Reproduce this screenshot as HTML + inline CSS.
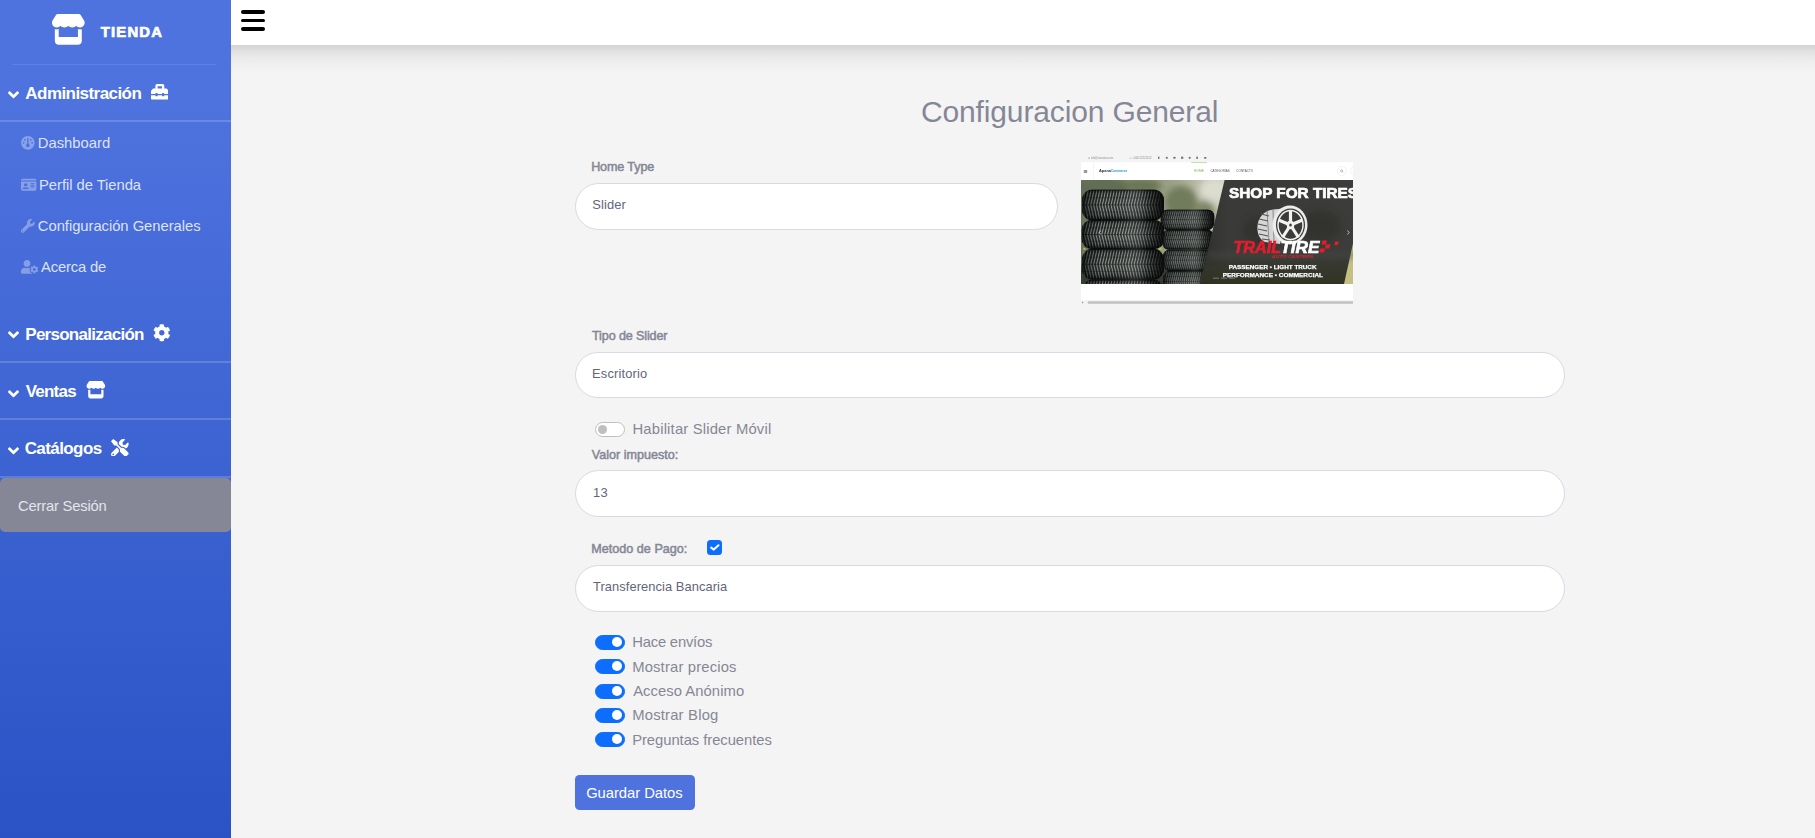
<!DOCTYPE html>
<html lang="es"><head><meta charset="utf-8"><title>Tienda - Configuracion General</title>
<style>
html,body{margin:0;padding:0}
html{overflow:hidden}
body{width:1815px;height:838px;overflow:hidden;background:#f4f4f4;font-family:"Liberation Sans",sans-serif;position:relative}
.t{position:absolute;white-space:nowrap;display:block}
.ic{position:absolute;display:block}
#sidebar{position:absolute;left:0;top:0;width:231px;height:838px;overflow:hidden;background:linear-gradient(180deg,#4e73df 10%,#224abe 100%) 0 0/100% 1040px no-repeat}
.hr{position:absolute;left:0;width:231px;height:2px;background:rgba(255,255,255,.17)}
#brandhr{position:absolute;left:12px;width:204px;top:63.5px;height:1px;background:rgba(255,255,255,.1)}
#logout{position:absolute;left:0;top:477.5px;width:231px;height:54.500px;background:#858796;border-radius:5px}
#topbar{position:absolute;left:231px;top:0;width:1584px;height:45px;background:#fff}
#tshadow{position:absolute;left:231px;top:45px;width:1584px;height:29px;background:linear-gradient(180deg,#d4d4d4 0%,#dadada 12%,#e2e2e2 23%,#ebebeb 48%,#f1f1f1 74%,#f4f4f4 100%)}
.bar{position:absolute;left:240.700px;width:24.500px;height:3.600px;border-radius:2px;background:#000}
.ctl{position:absolute;box-sizing:border-box;left:575px;height:47px;border:1px solid #d5dae6;border-radius:24px;background:#fff}
.sw{position:absolute;box-sizing:border-box;left:595px;width:30px;height:15px;border-radius:8px}
.sw.on{background:#0d6efd;border:1px solid #0d6efd}
.sw.on i{position:absolute;left:16.300px;top:1.400px;width:10px;height:10px;border-radius:50%;background:#fff}
.sw.off{background:#fff;border:1px solid #bfbfbf}
.sw.off i{position:absolute;left:1.700px;top:1.600px;width:9.600px;height:9.600px;border-radius:50%;background:#bfbfbf}
#chk{position:absolute;left:707px;top:540px;width:15px;height:15px;border-radius:3.500px;background:#0d6efd}
#btn{position:absolute;left:575px;top:775px;width:120px;height:35px;border-radius:4.500px;background:#4e73df}
#shot{position:absolute;left:1081px;top:152px}
</style></head><body>
<div id="sidebar">
<div id="brandhr"></div>
<div class="hr" style="top:120.2px"></div>
<div class="hr" style="top:360.7px"></div>
<div class="hr" style="top:418.1px"></div>
<div class="hr" style="top:475.8px"></div>
<div id="logout"></div>
</div>
<div id="topbar"></div><div id="tshadow"></div>
<div class="bar" style="top:10px"></div><div class="bar" style="top:18.900px;height:3.100px"></div><div class="bar" style="top:27.200px;height:3.700px"></div>
<div class="ctl" style="top:183px;width:483px"></div>
<div class="ctl" style="top:352px;width:990px;height:46px"></div>
<div class="ctl" style="top:470px;width:990px"></div>
<div class="ctl" style="top:565px;width:990px"></div>
<div class="sw off" style="top:422px"><i></i></div>
<div class="sw on" style="top:635.0px"><i></i></div><div class="sw on" style="top:659.0px"><i></i></div><div class="sw on" style="top:684.0px"><i></i></div><div class="sw on" style="top:708.0px"><i></i></div><div class="sw on" style="top:732.0px"><i></i></div>
<div id="chk"><svg width="15" height="15" viewBox="0 0 15 15" style="display:block"><path d="M4.200 7.600 L6.800 9.600 L11.500 5.300" fill="none" stroke="#fff" stroke-width="2" stroke-linecap="round" stroke-linejoin="round"/></svg></div>
<div id="btn"></div>
<svg id="shot" width="272" height="152" viewBox="0 0 272 152">
<defs>
<linearGradient id="bgG" x1="0" y1="0" x2="1" y2="0"><stop offset="0" stop-color="#69735a"/><stop offset=".3" stop-color="#808a6c"/><stop offset=".62" stop-color="#9da389"/><stop offset=".85" stop-color="#c3c5b0"/><stop offset="1" stop-color="#d2d2c2"/></linearGradient>
<radialGradient id="glow" cx=".5" cy=".5" r=".5"><stop offset="0" stop-color="#d9dacb" stop-opacity=".95"/><stop offset="1" stop-color="#d9dacb" stop-opacity="0"/></radialGradient>
<radialGradient id="dk" cx=".5" cy=".5" r=".5"><stop offset="0" stop-color="#4f5a42" stop-opacity=".9"/><stop offset="1" stop-color="#4f5a42" stop-opacity="0"/></radialGradient>
<linearGradient id="cyl" x1="0" y1="0" x2="1" y2="0"><stop offset="0" stop-color="#000" stop-opacity=".8"/><stop offset=".08" stop-color="#000" stop-opacity=".35"/><stop offset=".25" stop-color="#000" stop-opacity=".0"/><stop offset=".55" stop-color="#fff" stop-opacity=".06"/><stop offset=".8" stop-color="#000" stop-opacity=".3"/><stop offset="1" stop-color="#000" stop-opacity=".9"/></linearGradient>
<linearGradient id="cylV" x1="0" y1="0" x2="0" y2="1"><stop offset="0" stop-color="#000" stop-opacity=".6"/><stop offset=".14" stop-color="#000" stop-opacity=".05"/><stop offset=".5" stop-color="#fff" stop-opacity=".05"/><stop offset=".84" stop-color="#000" stop-opacity=".15"/><stop offset="1" stop-color="#000" stop-opacity=".8"/></linearGradient>
<linearGradient id="grs" x1="0" y1="0" x2="0" y2="1"><stop offset="0" stop-color="#34362a" stop-opacity="0"/><stop offset=".5" stop-color="#34362a" stop-opacity=".75"/><stop offset="1" stop-color="#30321f" stop-opacity=".9"/></linearGradient><clipPath id="panC"><polygon points="143.600,28 272,28 272,132 118.800,132"/></clipPath>
<linearGradient id="pan" x1="0" y1="0" x2="1" y2="0"><stop offset="0" stop-color="#2d2e2b"/><stop offset=".18" stop-color="#3a3a38"/><stop offset="1" stop-color="#3c3c3a"/></linearGradient>
<clipPath id="picC"><rect x="0" y="28" width="272" height="104"/></clipPath>
<filter id="soft" x="-5%" y="-5%" width="110%" height="110%"><feGaussianBlur stdDeviation=".4"/></filter>
<filter id="soft2"><feGaussianBlur stdDeviation=".25"/></filter>
<filter id="blur3" x="-20%" y="-20%" width="140%" height="140%"><feGaussianBlur stdDeviation="3"/></filter>
</defs>
<!-- top info row -->
<g fill="#8a8a8a" font-family="Liberation Sans, sans-serif" font-size="3.200" filter="url(#soft2)">
<text x="7" y="6.800" textLength="25" lengthAdjust="spacingAndGlyphs">✉ info@anovatus.com</text><text x="47.500" y="6.800" textLength="23" lengthAdjust="spacingAndGlyphs">☏ +506 22221122</text>
<g fill="#777"><rect x="77" y="4.600" width="1.400" height="2.400"/><circle cx="85.800" cy="5.800" r="1.100"/><rect x="92.400" y="4.700" width="2.100" height="2.100" rx=".6"/><rect x="100" y="4.700" width="2.300" height="2.100"/><circle cx="108.700" cy="5.800" r="1.100"/><rect x="115.300" y="4.600" width="1.600" height="2.400"/><rect x="123" y="4.900" width="2.500" height="1.800" rx=".6"/></g>
</g>
<rect x="0" y="10.200" width="272" height="138" fill="#fff"/>
<!-- nav -->
<g filter="url(#soft2)" font-family="Liberation Sans, sans-serif">
<rect x="110.300" y="10" width="15.700" height=".6" fill="#7cb342" opacity=".7"/>
<rect x="12.600" y="10.200" width=".4" height="17.800" fill="#e6e6e6"/>
<path d="M2.800 18.500h3.400M2.800 19.500h3.400M2.800 20.500h3.400" stroke="#444" stroke-width=".55"/>
<text x="18" y="20" font-size="3.900" font-weight="bold" fill="#2b2b3a" textLength="12" lengthAdjust="spacingAndGlyphs">Apana</text>
<text x="30" y="20" font-size="3.900" font-weight="bold" fill="#2a8fd6" textLength="16.200" lengthAdjust="spacingAndGlyphs">Commerce</text>
<text x="113.100" y="20.300" font-size="2.900" fill="#7cb342" textLength="9.800" lengthAdjust="spacingAndGlyphs">HOME</text>
<text x="129.400" y="20.300" font-size="2.900" fill="#555" textLength="19.400" lengthAdjust="spacingAndGlyphs">CATEGORÍAS</text>
<text x="155.300" y="20.300" font-size="2.900" fill="#555" textLength="16.900" lengthAdjust="spacingAndGlyphs">CONTACTO</text>
<circle cx="260.800" cy="19" r="4.500" fill="#fff" stroke="#e4e4e4" stroke-width=".5"/><circle cx="260.600" cy="18.800" r="1.100" fill="none" stroke="#666" stroke-width=".4"/><path d="M261.400 19.600l.9.900" stroke="#666" stroke-width=".4"/>
<circle cx="274" cy="19" r="4.500" fill="#fff" stroke="#e4e4e4" stroke-width=".5"/>
</g>
<!-- picture -->
<g clip-path="url(#picC)">
<rect x="0" y="28" width="150" height="104" fill="url(#bgG)"/>
<g filter="url(#blur3)">
<ellipse cx="22" cy="36" rx="26" ry="12" fill="#626d54"/>
<ellipse cx="62" cy="34" rx="18" ry="7" fill="#6a7556"/>
<ellipse cx="100" cy="50" rx="16" ry="16" fill="#717c5b"/>
<ellipse cx="124" cy="62" rx="10" ry="14" fill="#7d8666"/>
<ellipse cx="133" cy="38" rx="14" ry="12" fill="#dcdccf"/>
<rect x="-4" y="112" width="150" height="26" fill="#353a2e"/>
</g>
<g filter="url(#soft)">
<clipPath id="tcs0"><rect x="79.5" y="57.4" width="54" height="20.6" rx="7.4"/></clipPath><g clip-path="url(#tcs0)"><rect x="79.5" y="57.4" width="54" height="20.6" fill="#222624"/><path d="M79.6 58.6Q78.6 63.2 77.4 67.7Q78.6 72.2 79.6 76.8M81.7 58.6Q80.7 63.2 79.5 67.7Q80.7 72.2 81.7 76.8M83.8 58.6Q82.8 63.2 81.6 67.7Q82.8 72.2 83.8 76.8M85.9 58.6Q84.9 63.2 83.7 67.7Q84.9 72.2 85.9 76.8M88.0 58.6Q87.0 63.2 85.8 67.7Q87.0 72.2 88.0 76.8M90.1 58.6Q89.1 63.2 87.9 67.7Q89.1 72.2 90.1 76.8M92.2 58.6Q91.2 63.2 90.0 67.7Q91.2 72.2 92.2 76.8M94.3 58.6Q93.3 63.2 92.1 67.7Q93.3 72.2 94.3 76.8M96.4 58.6Q95.4 63.2 94.2 67.7Q95.4 72.2 96.4 76.8M98.5 58.6Q97.5 63.2 96.3 67.7Q97.5 72.2 98.5 76.8M100.6 58.6Q99.6 63.2 98.4 67.7Q99.6 72.2 100.6 76.8M102.7 58.6Q101.7 63.2 100.5 67.7Q101.7 72.2 102.7 76.8M104.8 58.6Q103.8 63.2 102.6 67.7Q103.8 72.2 104.8 76.8M106.9 58.6Q105.9 63.2 104.7 67.7Q105.9 72.2 106.9 76.8M109.0 58.6Q108.0 63.2 106.8 67.7Q108.0 72.2 109.0 76.8M111.1 58.6Q110.1 63.2 108.9 67.7Q110.1 72.2 111.1 76.8M113.2 58.6Q112.2 63.2 111.0 67.7Q112.2 72.2 113.2 76.8M115.3 58.6Q114.3 63.2 113.1 67.7Q114.3 72.2 115.3 76.8M117.4 58.6Q116.4 63.2 115.2 67.7Q116.4 72.2 117.4 76.8M119.5 58.6Q118.5 63.2 117.3 67.7Q118.5 72.2 119.5 76.8M121.6 58.6Q120.6 63.2 119.4 67.7Q120.6 72.2 121.6 76.8M123.7 58.6Q122.7 63.2 121.5 67.7Q122.7 72.2 123.7 76.8M125.8 58.6Q124.8 63.2 123.6 67.7Q124.8 72.2 125.8 76.8M127.9 58.6Q126.9 63.2 125.7 67.7Q126.9 72.2 127.9 76.8M130.0 58.6Q129.0 63.2 127.8 67.7Q129.0 72.2 130.0 76.8M132.1 58.6Q131.1 63.2 129.9 67.7Q131.1 72.2 132.1 76.8M134.2 58.6Q133.2 63.2 132.0 67.7Q133.2 72.2 134.2 76.8M136.3 58.6Q135.3 63.2 134.1 67.7Q135.3 72.2 136.3 76.8" stroke="#838a85" stroke-width="0.8" fill="none"/><path d="M79.5 67.7h54" stroke="#0c0e0d" stroke-width="0.72" opacity=".55"/><path d="M79.5 63.0h54M79.5 72.4h54" stroke="#0c0e0d" stroke-width="0.56" opacity=".4"/><rect x="79.5" y="57.4" width="54" height="20.6" fill="url(#cylV)"/><rect x="79.5" y="57.4" width="54" height="20.6" fill="url(#cyl)"/></g><clipPath id="tcs1"><rect x="81" y="77.6" width="52" height="20.2" rx="7.3"/></clipPath><g clip-path="url(#tcs1)"><rect x="81" y="77.6" width="52" height="20.2" fill="#222624"/><path d="M81.1 78.8Q80.1 83.3 78.9 87.7Q80.1 92.1 81.1 96.6M83.2 78.8Q82.2 83.3 81.0 87.7Q82.2 92.1 83.2 96.6M85.3 78.8Q84.3 83.3 83.1 87.7Q84.3 92.1 85.3 96.6M87.4 78.8Q86.4 83.3 85.2 87.7Q86.4 92.1 87.4 96.6M89.5 78.8Q88.5 83.3 87.3 87.7Q88.5 92.1 89.5 96.6M91.6 78.8Q90.6 83.3 89.4 87.7Q90.6 92.1 91.6 96.6M93.7 78.8Q92.7 83.3 91.5 87.7Q92.7 92.1 93.7 96.6M95.8 78.8Q94.8 83.3 93.6 87.7Q94.8 92.1 95.8 96.6M97.9 78.8Q96.9 83.3 95.7 87.7Q96.9 92.1 97.9 96.6M100.0 78.8Q99.0 83.3 97.8 87.7Q99.0 92.1 100.0 96.6M102.1 78.8Q101.1 83.3 99.9 87.7Q101.1 92.1 102.1 96.6M104.2 78.8Q103.2 83.3 102.0 87.7Q103.2 92.1 104.2 96.6M106.3 78.8Q105.3 83.3 104.1 87.7Q105.3 92.1 106.3 96.6M108.4 78.8Q107.4 83.3 106.2 87.7Q107.4 92.1 108.4 96.6M110.5 78.8Q109.5 83.3 108.3 87.7Q109.5 92.1 110.5 96.6M112.6 78.8Q111.6 83.3 110.4 87.7Q111.6 92.1 112.6 96.6M114.7 78.8Q113.7 83.3 112.5 87.7Q113.7 92.1 114.7 96.6M116.8 78.8Q115.8 83.3 114.6 87.7Q115.8 92.1 116.8 96.6M118.9 78.8Q117.9 83.3 116.7 87.7Q117.9 92.1 118.9 96.6M121.0 78.8Q120.0 83.3 118.8 87.7Q120.0 92.1 121.0 96.6M123.1 78.8Q122.1 83.3 120.9 87.7Q122.1 92.1 123.1 96.6M125.2 78.8Q124.2 83.3 123.0 87.7Q124.2 92.1 125.2 96.6M127.3 78.8Q126.3 83.3 125.1 87.7Q126.3 92.1 127.3 96.6M129.4 78.8Q128.4 83.3 127.2 87.7Q128.4 92.1 129.4 96.6M131.5 78.8Q130.5 83.3 129.3 87.7Q130.5 92.1 131.5 96.6M133.6 78.8Q132.6 83.3 131.4 87.7Q132.6 92.1 133.6 96.6M135.7 78.8Q134.7 83.3 133.5 87.7Q134.7 92.1 135.7 96.6" stroke="#838a85" stroke-width="0.8" fill="none"/><path d="M81 87.7h52" stroke="#0c0e0d" stroke-width="0.72" opacity=".55"/><path d="M81 83.1h52M81 92.3h52" stroke="#0c0e0d" stroke-width="0.56" opacity=".4"/><rect x="81" y="77.6" width="52" height="20.2" fill="url(#cylV)"/><rect x="81" y="77.6" width="52" height="20.2" fill="url(#cyl)"/></g><clipPath id="tcs2"><rect x="81.5" y="97.4" width="50.5" height="21.6" rx="7.8"/></clipPath><g clip-path="url(#tcs2)"><rect x="81.5" y="97.4" width="50.5" height="21.6" fill="#222624"/><path d="M81.6 98.6Q80.6 103.4 79.4 108.2Q80.6 113.0 81.6 117.8M83.7 98.6Q82.7 103.4 81.5 108.2Q82.7 113.0 83.7 117.8M85.8 98.6Q84.8 103.4 83.6 108.2Q84.8 113.0 85.8 117.8M87.9 98.6Q86.9 103.4 85.7 108.2Q86.9 113.0 87.9 117.8M90.0 98.6Q89.0 103.4 87.8 108.2Q89.0 113.0 90.0 117.8M92.1 98.6Q91.1 103.4 89.9 108.2Q91.1 113.0 92.1 117.8M94.2 98.6Q93.2 103.4 92.0 108.2Q93.2 113.0 94.2 117.8M96.3 98.6Q95.3 103.4 94.1 108.2Q95.3 113.0 96.3 117.8M98.4 98.6Q97.4 103.4 96.2 108.2Q97.4 113.0 98.4 117.8M100.5 98.6Q99.5 103.4 98.3 108.2Q99.5 113.0 100.5 117.8M102.6 98.6Q101.6 103.4 100.4 108.2Q101.6 113.0 102.6 117.8M104.7 98.6Q103.7 103.4 102.5 108.2Q103.7 113.0 104.7 117.8M106.8 98.6Q105.8 103.4 104.6 108.2Q105.8 113.0 106.8 117.8M108.9 98.6Q107.9 103.4 106.7 108.2Q107.9 113.0 108.9 117.8M111.0 98.6Q110.0 103.4 108.8 108.2Q110.0 113.0 111.0 117.8M113.1 98.6Q112.1 103.4 110.9 108.2Q112.1 113.0 113.1 117.8M115.2 98.6Q114.2 103.4 113.0 108.2Q114.2 113.0 115.2 117.8M117.3 98.6Q116.3 103.4 115.1 108.2Q116.3 113.0 117.3 117.8M119.4 98.6Q118.4 103.4 117.2 108.2Q118.4 113.0 119.4 117.8M121.5 98.6Q120.5 103.4 119.3 108.2Q120.5 113.0 121.5 117.8M123.6 98.6Q122.6 103.4 121.4 108.2Q122.6 113.0 123.6 117.8M125.7 98.6Q124.7 103.4 123.5 108.2Q124.7 113.0 125.7 117.8M127.8 98.6Q126.8 103.4 125.6 108.2Q126.8 113.0 127.8 117.8M129.9 98.6Q128.9 103.4 127.7 108.2Q128.9 113.0 129.9 117.8M132.0 98.6Q131.0 103.4 129.8 108.2Q131.0 113.0 132.0 117.8M134.1 98.6Q133.1 103.4 131.9 108.2Q133.1 113.0 134.1 117.8M136.2 98.6Q135.2 103.4 134.0 108.2Q135.2 113.0 136.2 117.8" stroke="#838a85" stroke-width="0.8" fill="none"/><path d="M81.5 108.2h50.5" stroke="#0c0e0d" stroke-width="0.72" opacity=".55"/><path d="M81.5 103.2h50.5M81.5 113.2h50.5" stroke="#0c0e0d" stroke-width="0.56" opacity=".4"/><rect x="81.5" y="97.4" width="50.5" height="21.6" fill="url(#cylV)"/><rect x="81.5" y="97.4" width="50.5" height="21.6" fill="url(#cyl)"/></g><clipPath id="tcs3"><rect x="82" y="118.6" width="50" height="22" rx="7.9"/></clipPath><g clip-path="url(#tcs3)"><rect x="82" y="118.6" width="50" height="22" fill="#222624"/><path d="M82.1 119.8Q81.1 124.8 79.9 129.6Q81.1 134.4 82.1 139.4M84.2 119.8Q83.2 124.8 82.0 129.6Q83.2 134.4 84.2 139.4M86.3 119.8Q85.3 124.8 84.1 129.6Q85.3 134.4 86.3 139.4M88.4 119.8Q87.4 124.8 86.2 129.6Q87.4 134.4 88.4 139.4M90.5 119.8Q89.5 124.8 88.3 129.6Q89.5 134.4 90.5 139.4M92.6 119.8Q91.6 124.8 90.4 129.6Q91.6 134.4 92.6 139.4M94.7 119.8Q93.7 124.8 92.5 129.6Q93.7 134.4 94.7 139.4M96.8 119.8Q95.8 124.8 94.6 129.6Q95.8 134.4 96.8 139.4M98.9 119.8Q97.9 124.8 96.7 129.6Q97.9 134.4 98.9 139.4M101.0 119.8Q100.0 124.8 98.8 129.6Q100.0 134.4 101.0 139.4M103.1 119.8Q102.1 124.8 100.9 129.6Q102.1 134.4 103.1 139.4M105.2 119.8Q104.2 124.8 103.0 129.6Q104.2 134.4 105.2 139.4M107.3 119.8Q106.3 124.8 105.1 129.6Q106.3 134.4 107.3 139.4M109.4 119.8Q108.4 124.8 107.2 129.6Q108.4 134.4 109.4 139.4M111.5 119.8Q110.5 124.8 109.3 129.6Q110.5 134.4 111.5 139.4M113.6 119.8Q112.6 124.8 111.4 129.6Q112.6 134.4 113.6 139.4M115.7 119.8Q114.7 124.8 113.5 129.6Q114.7 134.4 115.7 139.4M117.8 119.8Q116.8 124.8 115.6 129.6Q116.8 134.4 117.8 139.4M119.9 119.8Q118.9 124.8 117.7 129.6Q118.9 134.4 119.9 139.4M122.0 119.8Q121.0 124.8 119.8 129.6Q121.0 134.4 122.0 139.4M124.1 119.8Q123.1 124.8 121.9 129.6Q123.1 134.4 124.1 139.4M126.2 119.8Q125.2 124.8 124.0 129.6Q125.2 134.4 126.2 139.4M128.3 119.8Q127.3 124.8 126.1 129.6Q127.3 134.4 128.3 139.4M130.4 119.8Q129.4 124.8 128.2 129.6Q129.4 134.4 130.4 139.4M132.5 119.8Q131.5 124.8 130.3 129.6Q131.5 134.4 132.5 139.4M134.6 119.8Q133.6 124.8 132.4 129.6Q133.6 134.4 134.6 139.4" stroke="#838a85" stroke-width="0.8" fill="none"/><path d="M82 129.6h50" stroke="#0c0e0d" stroke-width="0.72" opacity=".55"/><path d="M82 124.5h50M82 134.7h50" stroke="#0c0e0d" stroke-width="0.56" opacity=".4"/><rect x="82" y="118.6" width="50" height="22" fill="url(#cylV)"/><rect x="82" y="118.6" width="50" height="22" fill="url(#cyl)"/></g><clipPath id="tcb0"><rect x="1" y="37.4" width="82" height="31" rx="11.0"/></clipPath><g clip-path="url(#tcb0)"><rect x="1" y="37.4" width="82" height="31" fill="#222624"/><path d="M1.3 38.6Q-0.1 46.1 -1.9 52.9Q-0.1 59.7 1.3 67.2M4.2 38.6Q2.8 46.1 1.0 52.9Q2.8 59.7 4.2 67.2M7.1 38.6Q5.7 46.1 3.9 52.9Q5.7 59.7 7.1 67.2M10.0 38.6Q8.6 46.1 6.8 52.9Q8.6 59.7 10.0 67.2M12.9 38.6Q11.5 46.1 9.7 52.9Q11.5 59.7 12.9 67.2M15.8 38.6Q14.4 46.1 12.6 52.9Q14.4 59.7 15.8 67.2M18.7 38.6Q17.3 46.1 15.5 52.9Q17.3 59.7 18.7 67.2M21.6 38.6Q20.2 46.1 18.4 52.9Q20.2 59.7 21.6 67.2M24.5 38.6Q23.1 46.1 21.3 52.9Q23.1 59.7 24.5 67.2M27.4 38.6Q26.0 46.1 24.2 52.9Q26.0 59.7 27.4 67.2M30.3 38.6Q28.9 46.1 27.1 52.9Q28.9 59.7 30.3 67.2M33.2 38.6Q31.8 46.1 30.0 52.9Q31.8 59.7 33.2 67.2M36.1 38.6Q34.7 46.1 32.9 52.9Q34.7 59.7 36.1 67.2M39.0 38.6Q37.6 46.1 35.8 52.9Q37.6 59.7 39.0 67.2M41.9 38.6Q40.5 46.1 38.7 52.9Q40.5 59.7 41.9 67.2M44.8 38.6Q43.4 46.1 41.6 52.9Q43.4 59.7 44.8 67.2M47.7 38.6Q46.3 46.1 44.5 52.9Q46.3 59.7 47.7 67.2M50.6 38.6Q49.2 46.1 47.4 52.9Q49.2 59.7 50.6 67.2M53.5 38.6Q52.1 46.1 50.3 52.9Q52.1 59.7 53.5 67.2M56.4 38.6Q55.0 46.1 53.2 52.9Q55.0 59.7 56.4 67.2M59.3 38.6Q57.9 46.1 56.1 52.9Q57.9 59.7 59.3 67.2M62.2 38.6Q60.8 46.1 59.0 52.9Q60.8 59.7 62.2 67.2M65.1 38.6Q63.7 46.1 61.9 52.9Q63.7 59.7 65.1 67.2M68.0 38.6Q66.6 46.1 64.8 52.9Q66.6 59.7 68.0 67.2M70.9 38.6Q69.5 46.1 67.7 52.9Q69.5 59.7 70.9 67.2M73.8 38.6Q72.4 46.1 70.6 52.9Q72.4 59.7 73.8 67.2M76.7 38.6Q75.3 46.1 73.5 52.9Q75.3 59.7 76.7 67.2M79.6 38.6Q78.2 46.1 76.4 52.9Q78.2 59.7 79.6 67.2M82.5 38.6Q81.1 46.1 79.3 52.9Q81.1 59.7 82.5 67.2M85.4 38.6Q84.0 46.1 82.2 52.9Q84.0 59.7 85.4 67.2M88.3 38.6Q86.9 46.1 85.1 52.9Q86.9 59.7 88.3 67.2" stroke="#8b928d" stroke-width="1.1" fill="none"/><path d="M1 52.9h82" stroke="#0c0e0d" stroke-width="0.99" opacity=".55"/><path d="M1 45.8h82M1 60.0h82" stroke="#0c0e0d" stroke-width="0.77" opacity=".4"/><rect x="1" y="37.4" width="82" height="31" fill="url(#cylV)"/><rect x="1" y="37.4" width="82" height="31" fill="url(#cyl)"/></g><clipPath id="tcb1"><rect x="0.5" y="68" width="83" height="29" rx="10.4"/></clipPath><g clip-path="url(#tcb1)"><rect x="0.5" y="68" width="83" height="29" fill="#222624"/><path d="M0.8 69.2Q-0.6 76.1 -2.4 82.5Q-0.6 88.9 0.8 95.8M3.7 69.2Q2.3 76.1 0.5 82.5Q2.3 88.9 3.7 95.8M6.6 69.2Q5.2 76.1 3.4 82.5Q5.2 88.9 6.6 95.8M9.5 69.2Q8.1 76.1 6.3 82.5Q8.1 88.9 9.5 95.8M12.4 69.2Q11.0 76.1 9.2 82.5Q11.0 88.9 12.4 95.8M15.3 69.2Q13.9 76.1 12.1 82.5Q13.9 88.9 15.3 95.8M18.2 69.2Q16.8 76.1 15.0 82.5Q16.8 88.9 18.2 95.8M21.1 69.2Q19.7 76.1 17.9 82.5Q19.7 88.9 21.1 95.8M24.0 69.2Q22.6 76.1 20.8 82.5Q22.6 88.9 24.0 95.8M26.9 69.2Q25.5 76.1 23.7 82.5Q25.5 88.9 26.9 95.8M29.8 69.2Q28.4 76.1 26.6 82.5Q28.4 88.9 29.8 95.8M32.7 69.2Q31.3 76.1 29.5 82.5Q31.3 88.9 32.7 95.8M35.6 69.2Q34.2 76.1 32.4 82.5Q34.2 88.9 35.6 95.8M38.5 69.2Q37.1 76.1 35.3 82.5Q37.1 88.9 38.5 95.8M41.4 69.2Q40.0 76.1 38.2 82.5Q40.0 88.9 41.4 95.8M44.3 69.2Q42.9 76.1 41.1 82.5Q42.9 88.9 44.3 95.8M47.2 69.2Q45.8 76.1 44.0 82.5Q45.8 88.9 47.2 95.8M50.1 69.2Q48.7 76.1 46.9 82.5Q48.7 88.9 50.1 95.8M53.0 69.2Q51.6 76.1 49.8 82.5Q51.6 88.9 53.0 95.8M55.9 69.2Q54.5 76.1 52.7 82.5Q54.5 88.9 55.9 95.8M58.8 69.2Q57.4 76.1 55.6 82.5Q57.4 88.9 58.8 95.8M61.7 69.2Q60.3 76.1 58.5 82.5Q60.3 88.9 61.7 95.8M64.6 69.2Q63.2 76.1 61.4 82.5Q63.2 88.9 64.6 95.8M67.5 69.2Q66.1 76.1 64.3 82.5Q66.1 88.9 67.5 95.8M70.4 69.2Q69.0 76.1 67.2 82.5Q69.0 88.9 70.4 95.8M73.3 69.2Q71.9 76.1 70.1 82.5Q71.9 88.9 73.3 95.8M76.2 69.2Q74.8 76.1 73.0 82.5Q74.8 88.9 76.2 95.8M79.1 69.2Q77.7 76.1 75.9 82.5Q77.7 88.9 79.1 95.8M82.0 69.2Q80.6 76.1 78.8 82.5Q80.6 88.9 82.0 95.8M84.9 69.2Q83.5 76.1 81.7 82.5Q83.5 88.9 84.9 95.8M87.8 69.2Q86.4 76.1 84.6 82.5Q86.4 88.9 87.8 95.8" stroke="#8b928d" stroke-width="1.1" fill="none"/><path d="M0.5 82.5h83" stroke="#0c0e0d" stroke-width="0.99" opacity=".55"/><path d="M0.5 75.8h83M0.5 89.2h83" stroke="#0c0e0d" stroke-width="0.77" opacity=".4"/><rect x="0.5" y="68" width="83" height="29" fill="url(#cylV)"/><rect x="0.5" y="68" width="83" height="29" fill="url(#cyl)"/></g><clipPath id="tcb2"><rect x="1" y="96.8" width="82" height="31" rx="11.0"/></clipPath><g clip-path="url(#tcb2)"><rect x="1" y="96.8" width="82" height="31" fill="#222624"/><path d="M1.3 98.0Q-0.1 105.5 -1.9 112.3Q-0.1 119.1 1.3 126.6M4.2 98.0Q2.8 105.5 1.0 112.3Q2.8 119.1 4.2 126.6M7.1 98.0Q5.7 105.5 3.9 112.3Q5.7 119.1 7.1 126.6M10.0 98.0Q8.6 105.5 6.8 112.3Q8.6 119.1 10.0 126.6M12.9 98.0Q11.5 105.5 9.7 112.3Q11.5 119.1 12.9 126.6M15.8 98.0Q14.4 105.5 12.6 112.3Q14.4 119.1 15.8 126.6M18.7 98.0Q17.3 105.5 15.5 112.3Q17.3 119.1 18.7 126.6M21.6 98.0Q20.2 105.5 18.4 112.3Q20.2 119.1 21.6 126.6M24.5 98.0Q23.1 105.5 21.3 112.3Q23.1 119.1 24.5 126.6M27.4 98.0Q26.0 105.5 24.2 112.3Q26.0 119.1 27.4 126.6M30.3 98.0Q28.9 105.5 27.1 112.3Q28.9 119.1 30.3 126.6M33.2 98.0Q31.8 105.5 30.0 112.3Q31.8 119.1 33.2 126.6M36.1 98.0Q34.7 105.5 32.9 112.3Q34.7 119.1 36.1 126.6M39.0 98.0Q37.6 105.5 35.8 112.3Q37.6 119.1 39.0 126.6M41.9 98.0Q40.5 105.5 38.7 112.3Q40.5 119.1 41.9 126.6M44.8 98.0Q43.4 105.5 41.6 112.3Q43.4 119.1 44.8 126.6M47.7 98.0Q46.3 105.5 44.5 112.3Q46.3 119.1 47.7 126.6M50.6 98.0Q49.2 105.5 47.4 112.3Q49.2 119.1 50.6 126.6M53.5 98.0Q52.1 105.5 50.3 112.3Q52.1 119.1 53.5 126.6M56.4 98.0Q55.0 105.5 53.2 112.3Q55.0 119.1 56.4 126.6M59.3 98.0Q57.9 105.5 56.1 112.3Q57.9 119.1 59.3 126.6M62.2 98.0Q60.8 105.5 59.0 112.3Q60.8 119.1 62.2 126.6M65.1 98.0Q63.7 105.5 61.9 112.3Q63.7 119.1 65.1 126.6M68.0 98.0Q66.6 105.5 64.8 112.3Q66.6 119.1 68.0 126.6M70.9 98.0Q69.5 105.5 67.7 112.3Q69.5 119.1 70.9 126.6M73.8 98.0Q72.4 105.5 70.6 112.3Q72.4 119.1 73.8 126.6M76.7 98.0Q75.3 105.5 73.5 112.3Q75.3 119.1 76.7 126.6M79.6 98.0Q78.2 105.5 76.4 112.3Q78.2 119.1 79.6 126.6M82.5 98.0Q81.1 105.5 79.3 112.3Q81.1 119.1 82.5 126.6M85.4 98.0Q84.0 105.5 82.2 112.3Q84.0 119.1 85.4 126.6M88.3 98.0Q86.9 105.5 85.1 112.3Q86.9 119.1 88.3 126.6" stroke="#8b928d" stroke-width="1.1" fill="none"/><path d="M1 112.3h82" stroke="#0c0e0d" stroke-width="0.99" opacity=".55"/><path d="M1 105.2h82M1 119.4h82" stroke="#0c0e0d" stroke-width="0.77" opacity=".4"/><rect x="1" y="96.8" width="82" height="31" fill="url(#cylV)"/><rect x="1" y="96.8" width="82" height="31" fill="url(#cyl)"/></g><clipPath id="tcb3"><rect x="1.5" y="127.4" width="81" height="30" rx="10.8"/></clipPath><g clip-path="url(#tcb3)"><rect x="1.5" y="127.4" width="81" height="30" fill="#222624"/><path d="M1.8 128.6Q0.4 135.8 -1.4 142.4Q0.4 149.0 1.8 156.2M4.7 128.6Q3.3 135.8 1.5 142.4Q3.3 149.0 4.7 156.2M7.6 128.6Q6.2 135.8 4.4 142.4Q6.2 149.0 7.6 156.2M10.5 128.6Q9.1 135.8 7.3 142.4Q9.1 149.0 10.5 156.2M13.4 128.6Q12.0 135.8 10.2 142.4Q12.0 149.0 13.4 156.2M16.3 128.6Q14.9 135.8 13.1 142.4Q14.9 149.0 16.3 156.2M19.2 128.6Q17.8 135.8 16.0 142.4Q17.8 149.0 19.2 156.2M22.1 128.6Q20.7 135.8 18.9 142.4Q20.7 149.0 22.1 156.2M25.0 128.6Q23.6 135.8 21.8 142.4Q23.6 149.0 25.0 156.2M27.9 128.6Q26.5 135.8 24.7 142.4Q26.5 149.0 27.9 156.2M30.8 128.6Q29.4 135.8 27.6 142.4Q29.4 149.0 30.8 156.2M33.7 128.6Q32.3 135.8 30.5 142.4Q32.3 149.0 33.7 156.2M36.6 128.6Q35.2 135.8 33.4 142.4Q35.2 149.0 36.6 156.2M39.5 128.6Q38.1 135.8 36.3 142.4Q38.1 149.0 39.5 156.2M42.4 128.6Q41.0 135.8 39.2 142.4Q41.0 149.0 42.4 156.2M45.3 128.6Q43.9 135.8 42.1 142.4Q43.9 149.0 45.3 156.2M48.2 128.6Q46.8 135.8 45.0 142.4Q46.8 149.0 48.2 156.2M51.1 128.6Q49.7 135.8 47.9 142.4Q49.7 149.0 51.1 156.2M54.0 128.6Q52.6 135.8 50.8 142.4Q52.6 149.0 54.0 156.2M56.9 128.6Q55.5 135.8 53.7 142.4Q55.5 149.0 56.9 156.2M59.8 128.6Q58.4 135.8 56.6 142.4Q58.4 149.0 59.8 156.2M62.7 128.6Q61.3 135.8 59.5 142.4Q61.3 149.0 62.7 156.2M65.6 128.6Q64.2 135.8 62.4 142.4Q64.2 149.0 65.6 156.2M68.5 128.6Q67.1 135.8 65.3 142.4Q67.1 149.0 68.5 156.2M71.4 128.6Q70.0 135.8 68.2 142.4Q70.0 149.0 71.4 156.2M74.3 128.6Q72.9 135.8 71.1 142.4Q72.9 149.0 74.3 156.2M77.2 128.6Q75.8 135.8 74.0 142.4Q75.8 149.0 77.2 156.2M80.1 128.6Q78.7 135.8 76.9 142.4Q78.7 149.0 80.1 156.2M83.0 128.6Q81.6 135.8 79.8 142.4Q81.6 149.0 83.0 156.2M85.9 128.6Q84.5 135.8 82.7 142.4Q84.5 149.0 85.9 156.2" stroke="#8b928d" stroke-width="1.1" fill="none"/><path d="M1.5 142.4h81" stroke="#0c0e0d" stroke-width="0.99" opacity=".55"/><path d="M1.5 135.5h81M1.5 149.3h81" stroke="#0c0e0d" stroke-width="0.77" opacity=".4"/><rect x="1.5" y="127.4" width="81" height="30" fill="url(#cylV)"/><rect x="1.5" y="127.4" width="81" height="30" fill="url(#cyl)"/></g>
<path d="M2.500 95.800l3 1.100-3 1.100zM78 95.600l3.500 1.300-3.500 1.300z" fill="#c9c43a"/>
</g>
<!-- dark panel -->
<polygon points="143.600,28 272,28 272,132 118.800,132" fill="url(#pan)"/>
<rect x="118" y="100" width="154" height="32" fill="url(#grs)" clip-path="url(#panC)"/><polygon points="272,91.500 272,132 263,132" fill="#c4bf83"/>
<g filter="url(#blur3)" opacity=".5"><ellipse cx="180" cy="78" rx="18" ry="14" fill="#2a2b28"/><ellipse cx="240" cy="74" rx="20" ry="16" fill="#2a2b28"/><rect x="125" y="100" width="150" height="6" fill="#4a4b46"/></g>
<g filter="url(#soft2)" font-family="Liberation Sans, sans-serif">
<text x="148" y="45.700" font-size="15.300" font-weight="bold" fill="#fff" stroke="#fff" stroke-width=".7" textLength="129" lengthAdjust="spacingAndGlyphs">SHOP FOR TIRES</text>
<!-- wheel -->
<g>
<path d="M192 57.500 C182 59 175.500 67 176.500 78 C177 84 180 88 184 90 L199 92 L207 56 Z" fill="#d6d6d6"/>
<path d="M180 62l8 2M178 67l9 2M177 72l9 2M177 77l9 2M178 82l9 2M181 87l8 1" stroke="#555" stroke-width="1.100" fill="none"/>
<path d="M186 58l2 32M192 57l1 34" stroke="#666" stroke-width=".7" fill="none"/>
<ellipse cx="209" cy="73" rx="17.500" ry="19.500" fill="#ececec"/>
<ellipse cx="209.500" cy="73" rx="14.500" ry="16.500" fill="#3b3b39"/>
<ellipse cx="209.500" cy="73" rx="12.500" ry="14.500" fill="none" stroke="#f2f2f2" stroke-width="1.500"/>
<g stroke="#f2f2f2" stroke-width="3.200" stroke-linecap="butt"><path d="M209.500 73L209.500 59"/><path d="M209.500 73L221.500 68"/><path d="M209.500 73L217.500 85.500"/><path d="M209.500 73L201.500 85.500"/><path d="M209.500 73L197.500 68"/></g>
<ellipse cx="209.500" cy="73" rx="3.800" ry="4.200" fill="#f2f2f2"/><ellipse cx="209.500" cy="73" rx="1.300" ry="1.500" fill="#3b3b39"/>
</g>
<text x="152.500" y="100.500" font-size="16.600" font-weight="bold" font-style="italic" fill="#e31e2d" stroke="#e31e2d" stroke-width=".7" textLength="47.500" lengthAdjust="spacingAndGlyphs">TRAIL</text>
<text x="199.400" y="100.500" font-size="16.600" font-weight="bold" font-style="italic" fill="#fff" stroke="#fff" stroke-width=".7" textLength="39" lengthAdjust="spacingAndGlyphs">TIRE</text>
<g fill="#e31e2d" transform="skewX(-14)"><rect x="263.500" y="88.500" width="4.500" height="4"/><rect x="268" y="92.500" width="4.500" height="4"/><rect x="263.500" y="96.500" width="4.500" height="4"/><rect x="276.500" y="89.500" width="3.600" height="3.400"/></g>
<text x="190.800" y="105.900" font-size="3.900" font-weight="bold" font-style="italic" fill="#e31e2d" textLength="41.600" lengthAdjust="spacingAndGlyphs">AUTO CENTERS</text>
<text x="147.800" y="117.200" font-size="6.100" font-weight="bold" fill="#fff" stroke="#fff" stroke-width=".25" textLength="87.700" lengthAdjust="spacingAndGlyphs">PASSENGER • LIGHT TRUCK</text>
<text x="141.700" y="125.100" font-size="6.100" font-weight="bold" fill="#fff" stroke="#fff" stroke-width=".25" textLength="100.300" lengthAdjust="spacingAndGlyphs">PERFORMANCE • COMMERCIAL</text>
<path d="M132 126.200h6M140 126.200h6M148 126.200h6" stroke="#9a9a98" stroke-width=".7"/>
<path d="M20 78.500l-1.800 2 1.800 2" fill="none" stroke="#ddd" stroke-width=".8"/><path d="M266.400 78.500l1.800 2 -1.800 2" fill="none" stroke="#ddd" stroke-width=".8"/>
</g>
</g>
<!-- scrollbar -->
<rect x="6.800" y="149.200" width="265.200" height="2.600" fill="#c2c2c2"/>
<path d="M2.400 150.500l-1.400 -.9v1.800z" fill="#777"/>
</svg>

<svg class="ic" style="left:50.60px;top:14.30px" width="34.65" height="30.80" viewBox="0 0 576 512"><path fill="#fff" d="M547.6 103.8L490.3 13.1C485.2 5 476.1 0 466.4 0H109.6C99.9 0 90.8 5 85.7 13.1L28.3 103.8c-29.600 46.800-3.400 111.900 51.900 119.400c4 .5 8.100 .8 12.100 .8c26.100 0 49.300-11.400 65.200-29c15.900 17.600 39.100 29 65.200 29c26.100 0 49.300-11.400 65.200-29c15.900 17.600 39.100 29 65.200 29c26.200 0 49.300-11.400 65.200-29c16 17.600 39.100 29 65.200 29c4.100 0 8.100-.3 12.100-.8c55.500-7.400 81.800-72.500 52.100-119.400zM499.700 254.900l-.1 0c-5.300 .7-10.700 1.100-16.200 1.100c-12.400 0-24.300-1.900-35.400-5.300V384H128V250.600c-11.200 3.500-23.200 5.400-35.600 5.400c-5.500 0-11-.4-16.300-1.100l-.1 0c-4.100-.6-8.100-1.300-12-2.300V384v64c0 35.300 28.700 64 64 64H448c35.300 0 64-28.700 64-64V384 252.600c-4 1-8 1.800-12.300 2.300z"/></svg>
<svg class="ic" style="left:7.95px;top:85.55px" width="11.00" height="17.60" viewBox="0 0 320 512"><path fill="#fff" d="M143 352.3L7 216.3c-9.4-9.4-9.4-24.6 0-33.9l22.6-22.6c9.4-9.4 24.6-9.4 33.900 0l96.400 96.400 96.400-96.400c9.400-9.400 24.600-9.400 33.900 0l22.600 22.600c9.400 9.400 9.400 24.600 0 33.900l-136 136c-9.200 9.400-24.400 9.400-33.800 0z"/></svg>
<svg class="ic" style="left:150.50px;top:82.90px" width="17.70" height="17.70" viewBox="0 0 512 512"><path fill="#fff" d="M502.63 214.63l-45.250-45.250c-6-6-14.140-9.370-22.630-9.370H384V80c0-26.510-21.490-48-48-48H176c-26.510 0-48 21.490-48 48v80H77.250c-8.490 0-16.620 3.370-22.630 9.370L9.370 214.630c-6 6-9.370 14.140-9.370 22.630V320h128v-16c0-8.840 7.160-16 16-16h32c8.840 0 16 7.160 16 16v16h128v-16c0-8.840 7.160-16 16-16h32c8.840 0 16 7.160 16 16v16h128v-82.750c0-8.480-3.370-16.620-9.370-22.620zM320 160H192V96h128v64zm64 208c0 8.840-7.160 16-16 16h-32c-8.840 0-16-7.160-16-16v-16H192v16c0 8.840-7.160 16-16 16h-32c-8.840 0-16-7.160-16-16v-16H0v96c0 17.670 14.330 32 32 32h448c17.670 0 32-14.330 32-32v-96H384v16z"/></svg>
<svg class="ic" style="left:21.30px;top:136.10px" width="13.70" height="13.70" viewBox="0 0 512 512"><path fill="rgba(255,255,255,.34)" d="M0 256a256 256 0 1 1 512 0A256 256 0 1 1 0 256zm320 96c0-26.900-16.500-49.900-40-59.300V88c0-13.300-10.700-24-24-24s-24 10.700-24 24V292.700c-23.500 9.500-40 32.500-40 59.300c0 35.300 28.700 64 64 64s64-28.700 64-64zM144 176a32 32 0 1 0 0-64 32 32 0 1 0 0 64zm-16 80a32 32 0 1 0 -64 0 32 32 0 1 0 64 0zm288 32a32 32 0 1 0 0-64 32 32 0 1 0 0 64zM400 144a32 32 0 1 0 -64 0 32 32 0 1 0 64 0z"/></svg>
<svg class="ic" style="left:21.30px;top:178.20px" width="15.41" height="13.70" viewBox="0 0 576 512"><path fill="rgba(255,255,255,.34)" d="M0 96l576 0c0-35.300-28.700-64-64-64L64 32C28.700 32 0 60.700 0 96zm0 32L0 416c0 35.300 28.700 64 64 64l448 0c35.300 0 64-28.700 64-64l0-288L0 128zM64 405.300c0-29.500 23.900-53.300 53.300-53.300l117.300 0c29.500 0 53.300 23.900 53.300 53.300c0 5.900-4.800 10.700-10.700 10.700L74.700 416c-5.900 0-10.700-4.800-10.700-10.700zM176 192a64 64 0 1 1 0 128 64 64 0 1 1 0-128zm176 16c0-8.800 7.200-16 16-16l128 0c8.800 0 16 7.200 16 16s-7.200 16-16 16l-128 0c-8.800 0-16-7.200-16-16zm0 64c0-8.800 7.200-16 16-16l128 0c8.800 0 16 7.200 16 16s-7.200 16-16 16l-128 0c-8.800 0-16-7.200-16-16zm0 64c0-8.800 7.200-16 16-16l128 0c8.800 0 16 7.200 16 16s-7.200 16-16 16l-128 0c-8.800 0-16-7.200-16-16z"/></svg>
<svg class="ic" style="left:21.30px;top:219.20px" width="13.70" height="13.70" viewBox="0 0 512 512"><path fill="rgba(255,255,255,.34)" d="M507.73 109.1c-2.240-9.030-13.540-12.090-20.120-5.510l-74.360 74.360-67.880-11.310-11.310-67.880 74.360-74.360c6.620-6.620 3.430-17.900-5.660-20.160-47.380-11.740-99.550.91-136.580 37.930-39.640 39.640-50.550 97.100-34.050 147.200L18.740 402.760c-24.990 24.990-24.990 65.510 0 90.500 24.990 24.990 65.510 24.990 90.500 0l213.210-213.210c50.120 16.710 107.470 5.680 147.370-34.220 37.070-37.070 49.700-89.320 37.910-136.730zM64 472c-13.250 0-24-10.750-24-24 0-13.260 10.750-24 24-24s24 10.740 24 24c0 13.250-10.750 24-24 24z"/></svg>
<svg class="ic" style="left:21.30px;top:260.10px" width="17.12" height="13.70" viewBox="0 0 640 512"><path fill="rgba(255,255,255,.34)" d="M610.5 373.3c2.600-14.100 2.600-28.500 0-42.600l25.800-14.900c3-1.700 4.300-5.200 3.300-8.500-6.700-21.600-18.200-41.200-33.200-57.400-2.300-2.500-6-3.100-9-1.400l-25.800 14.900c-10.900-9.300-23.400-16.500-36.900-21.300v-29.800c0-3.400-2.400-6.400-5.700-7.100-22.300-5-45-4.800-66.200 0-3.300.7-5.700 3.700-5.700 7.100v29.800c-13.500 4.800-26 12-36.900 21.300l-25.800-14.900c-2.900-1.700-6.700-1.100-9 1.400-15 16.200-26.500 35.800-33.200 57.400-1 3.300.4 6.800 3.300 8.500l25.800 14.900c-2.600 14.100-2.600 28.500 0 42.600l-25.800 14.900c-3 1.700-4.300 5.200-3.300 8.500 6.700 21.600 18.200 41.100 33.200 57.400 2.300 2.500 6 3.100 9 1.400l25.800-14.900c10.900 9.300 23.400 16.500 36.900 21.300v29.800c0 3.400 2.400 6.400 5.700 7.100 22.300 5 45 4.800 66.200 0 3.300-.7 5.700-3.700 5.700-7.100v-29.800c13.500-4.800 26-12 36.900-21.300l25.800 14.900c2.900 1.700 6.700 1.100 9-1.400 15-16.200 26.500-35.800 33.200-57.400 1-3.300-.4-6.800-3.300-8.500l-25.800-14.900zM496 400.500c-26.800 0-48.500-21.800-48.500-48.500s21.800-48.500 48.500-48.500 48.500 21.800 48.500 48.500-21.700 48.500-48.500 48.500zM224 256c70.700 0 128-57.300 128-128S294.700 0 224 0 96 57.300 96 128s57.300 128 128 128zm201.200 226.500c-2.300-1.200-4.600-2.600-6.800-3.900l-7.900 4.600c-6 3.400-12.800 5.300-19.600 5.300-10.900 0-21.400-4.600-28.900-12.600-18.300-19.800-32.300-43.900-40.200-69.600-5.500-17.700 1.900-36.400 17.900-45.700l7.900-4.600c-.1-2.600-.1-5.200 0-7.800l-7.900-4.600c-16-9.200-23.400-28-17.900-45.700.9-2.900 2.200-5.800 3.200-8.700-3.800-.3-7.500-1.200-11.400-1.200h-16.700c-22.200 10.200-46.900 16-72.900 16s-50.600-5.800-72.900-16h-16.700C60.200 288 0 348.200 0 422.400V464c0 26.500 21.500 48 48 48h352c10.100 0 19.500-3.200 27.200-8.500-1.200-3.800-2-7.700-2-11.800v-9.200z"/></svg>
<svg class="ic" style="left:7.95px;top:326.30px" width="11.00" height="17.60" viewBox="0 0 320 512"><path fill="#fff" d="M143 352.3L7 216.3c-9.4-9.4-9.4-24.6 0-33.9l22.6-22.6c9.4-9.4 24.6-9.4 33.900 0l96.400 96.400 96.400-96.400c9.400-9.400 24.600-9.400 33.900 0l22.600 22.600c9.400 9.400 9.400 24.600 0 33.900l-136 136c-9.200 9.400-24.400 9.400-33.800 0z"/></svg>
<svg class="ic" style="left:153.00px;top:324.10px" width="17.60" height="17.60" viewBox="0 0 512 512"><path fill="#fff" d="M487.4 315.7l-42.600-24.600c4.300-23.200 4.300-47 0-70.200l42.600-24.600c4.900-2.800 7.100-8.600 5.500-14-11.100-35.600-30-67.800-54.700-94.600-3.800-4.100-10-5.100-14.800-2.300L380.800 110c-17.900-15.400-38.500-27.300-60.800-35.100V25.800c0-5.600-3.900-10.500-9.400-11.700-36.700-8.200-74.300-7.800-109.200 0-5.500 1.200-9.400 6.100-9.400 11.700V75c-22.200 7.900-42.800 19.800-60.800 35.100L88.700 85.500c-4.900-2.800-11-1.900-14.800 2.300-24.700 26.700-43.600 58.900-54.700 94.600-1.700 5.400.6 11.200 5.500 14L67.300 221c-4.300 23.200-4.300 47 0 70.200l-42.600 24.600c-4.900 2.800-7.100 8.600-5.500 14 11.100 35.600 30 67.800 54.700 94.600 3.800 4.100 10 5.100 14.800 2.300l42.600-24.600c17.900 15.400 38.500 27.300 60.800 35.100v49.200c0 5.600 3.900 10.500 9.400 11.700 36.700 8.200 74.300 7.800 109.200 0 5.500-1.200 9.400-6.100 9.400-11.700v-49.200c22.200-7.900 42.800-19.800 60.800-35.100l42.600 24.600c4.900 2.800 11 1.900 14.800-2.300 24.700-26.700 43.600-58.900 54.700-94.600 1.500-5.500-.7-11.300-5.600-14.100zM256 336c-44.100 0-80-35.900-80-80s35.900-80 80-80 80 35.900 80 80-35.900 80-80 80z"/></svg>
<svg class="ic" style="left:7.95px;top:384.65px" width="11.00" height="17.60" viewBox="0 0 320 512"><path fill="#fff" d="M143 352.3L7 216.3c-9.4-9.4-9.4-24.6 0-33.9l22.6-22.6c9.4-9.4 24.6-9.4 33.900 0l96.400 96.400 96.400-96.400c9.400-9.400 24.600-9.400 33.900 0l22.600 22.600c9.400 9.400 9.400 24.600 0 33.900l-136 136c-9.200 9.400-24.400 9.400-33.800 0z"/></svg>
<svg class="ic" style="left:85.90px;top:381.00px" width="19.69" height="17.50" viewBox="0 0 576 512"><path fill="#fff" d="M547.6 103.8L490.3 13.1C485.2 5 476.1 0 466.4 0H109.6C99.9 0 90.8 5 85.7 13.1L28.3 103.8c-29.600 46.800-3.400 111.900 51.900 119.400c4 .5 8.100 .8 12.100 .8c26.100 0 49.300-11.400 65.200-29c15.900 17.600 39.100 29 65.200 29c26.100 0 49.300-11.400 65.200-29c15.900 17.600 39.100 29 65.200 29c26.200 0 49.300-11.400 65.200-29c16 17.600 39.100 29 65.200 29c4.100 0 8.100-.3 12.100-.8c55.500-7.400 81.800-72.500 52.100-119.400zM499.700 254.900l-.1 0c-5.300 .7-10.700 1.100-16.200 1.100c-12.400 0-24.300-1.900-35.400-5.300V384H128V250.600c-11.200 3.500-23.200 5.400-35.600 5.400c-5.500 0-11-.4-16.300-1.100l-.1 0c-4.100-.6-8.100-1.300-12-2.300V384v64c0 35.300 28.700 64 64 64H448c35.300 0 64-28.700 64-64V384 252.600c-4 1-8 1.800-12.300 2.300z"/></svg>
<svg class="ic" style="left:7.95px;top:441.75px" width="11.00" height="17.60" viewBox="0 0 320 512"><path fill="#fff" d="M143 352.3L7 216.3c-9.4-9.4-9.4-24.6 0-33.9l22.6-22.6c9.4-9.4 24.6-9.4 33.900 0l96.400 96.400 96.400-96.400c9.400-9.400 24.600-9.400 33.900 0l22.600 22.600c9.400 9.400 9.400 24.600 0 33.900l-136 136c-9.200 9.400-24.400 9.400-33.800 0z"/></svg>
<svg class="ic" style="left:111.00px;top:438.90px" width="17.60" height="17.60" viewBox="0 0 512 512"><path fill="#fff" d="M501.1 395.7L384 278.6c-23.100-23.100-57.600-27.600-85.400-13.900L192 158.100V96L64 0 0 64l96 128h62.100l106.600 106.600c-13.600 27.800-9.200 62.300 13.900 85.400l117.100 117.100c14.600 14.600 38.200 14.600 52.700 0l52.700-52.700c14.500-14.600 14.500-38.200 0-52.700zM331.700 225c28.300 0 54.900 11 74.900 31l19.400 19.400c15.800-6.900 30.800-16.500 43.800-29.500 37.100-37.100 49.700-89.300 37.900-136.700-2.200-9-13.500-12.100-20.100-5.500l-74.400 74.400-67.900-11.300L334 98.900l74.400-74.400c6.600-6.600 3.400-17.900-5.700-20.200-47.400-11.700-99.600.9-136.600 37.900-28.500 28.500-41.900 66.100-41.200 103.600l82.100 82.100c8.100-1.900 16.500-2.900 24.700-2.900zm-103.900 82l-56.700-56.700L18.700 402.800c-25 25-25 65.500 0 90.500s65.500 25 90.500 0l123.600-123.600c-7.600-19.900-9.900-41.600-5-62.700zM64 472c-13.200 0-24-10.800-24-24 0-13.300 10.700-24 24-24s24 10.700 24 24c0 13.200-10.700 24-24 24z"/></svg>
<span class="t" style="left:100.73px;top:25.00px;font-size:14.8px;line-height:14.8px;font-weight:bold;color:#ffffff;letter-spacing:1.216px;-webkit-text-stroke:.7px #fff;">TIENDA</span>
<span class="t" style="left:25.34px;top:85.00px;font-size:17.0px;line-height:17.0px;font-weight:bold;color:#ffffff;letter-spacing:-0.557px;">Administración</span>
<span class="t" style="left:37.79px;top:136.00px;font-size:14.8px;line-height:14.8px;font-weight:normal;color:rgba(255,255,255,.82);letter-spacing:-0.007px;">Dashboard</span>
<span class="t" style="left:39.04px;top:178.00px;font-size:14.8px;line-height:14.8px;font-weight:normal;color:rgba(255,255,255,.82);letter-spacing:-0.050px;">Perfil de Tienda</span>
<span class="t" style="left:37.84px;top:219.00px;font-size:14.8px;line-height:14.8px;font-weight:normal;color:rgba(255,255,255,.82);letter-spacing:-0.044px;">Configuración Generales</span>
<span class="t" style="left:41.06px;top:260.00px;font-size:14.8px;line-height:14.8px;font-weight:normal;color:rgba(255,255,255,.82);letter-spacing:-0.182px;">Acerca de</span>
<span class="t" style="left:25.31px;top:326.00px;font-size:17.0px;line-height:17.0px;font-weight:bold;color:#ffffff;letter-spacing:-0.737px;">Personalización</span>
<span class="t" style="left:25.72px;top:383.00px;font-size:17.0px;line-height:17.0px;font-weight:bold;color:#ffffff;letter-spacing:-0.787px;">Ventas</span>
<span class="t" style="left:24.66px;top:440.00px;font-size:17.0px;line-height:17.0px;font-weight:bold;color:#ffffff;letter-spacing:-0.586px;">Catálogos</span>
<span class="t" style="left:18.02px;top:499.00px;font-size:14.8px;line-height:14.8px;font-weight:normal;color:#e3e4ec;letter-spacing:-0.212px;">Cerrar Sesión</span>
<span class="t" style="left:920.96px;top:97.00px;font-size:30.0px;line-height:30.0px;font-weight:normal;color:#858796;letter-spacing:-0.137px;">Configuracion General</span>
<span class="t" style="left:591.17px;top:161.00px;font-size:12.6px;line-height:12.6px;font-weight:normal;color:#858796;letter-spacing:-0.131px;-webkit-text-stroke:.5px #858796;">Home Type</span>
<span class="t" style="left:592.25px;top:199.00px;font-size:12.9px;line-height:12.9px;font-weight:normal;color:#63657a;letter-spacing:0.139px;">Slider</span>
<span class="t" style="left:592.04px;top:330.00px;font-size:12.6px;line-height:12.6px;font-weight:normal;color:#858796;letter-spacing:-0.133px;-webkit-text-stroke:.5px #858796;">Tipo de Slider</span>
<span class="t" style="left:592.04px;top:368.00px;font-size:12.9px;line-height:12.9px;font-weight:normal;color:#63657a;letter-spacing:0.170px;">Escritorio</span>
<span class="t" style="left:632.48px;top:422.00px;font-size:14.8px;line-height:14.8px;font-weight:normal;color:#858796;letter-spacing:0.185px;">Habilitar Slider Móvil</span>
<span class="t" style="left:591.73px;top:449.00px;font-size:12.6px;line-height:12.6px;font-weight:normal;color:#858796;letter-spacing:0.004px;-webkit-text-stroke:.5px #858796;">Valor impuesto:</span>
<span class="t" style="left:592.99px;top:487.00px;font-size:12.9px;line-height:12.9px;font-weight:normal;color:#63657a;letter-spacing:0.268px;">13</span>
<span class="t" style="left:591.24px;top:543.00px;font-size:12.6px;line-height:12.6px;font-weight:normal;color:#858796;letter-spacing:0.014px;-webkit-text-stroke:.5px #858796;">Metodo de Pago:</span>
<span class="t" style="left:593.04px;top:581.00px;font-size:12.9px;line-height:12.9px;font-weight:normal;color:#63657a;letter-spacing:0.061px;">Transferencia Bancaria</span>
<span class="t" style="left:632.18px;top:635.00px;font-size:14.8px;line-height:14.8px;font-weight:normal;color:#858796;letter-spacing:-0.195px;">Hace envíos</span>
<span class="t" style="left:632.18px;top:660.00px;font-size:14.8px;line-height:14.8px;font-weight:normal;color:#858796;letter-spacing:0.165px;">Mostrar precios</span>
<span class="t" style="left:633.17px;top:684.00px;font-size:14.8px;line-height:14.8px;font-weight:normal;color:#858796;letter-spacing:0.057px;">Acceso Anónimo</span>
<span class="t" style="left:632.18px;top:708.00px;font-size:14.8px;line-height:14.8px;font-weight:normal;color:#858796;letter-spacing:0.205px;">Mostrar Blog</span>
<span class="t" style="left:632.18px;top:733.00px;font-size:14.8px;line-height:14.8px;font-weight:normal;color:#858796;letter-spacing:-0.052px;">Preguntas frecuentes</span>
<span class="t" style="left:586.17px;top:786.00px;font-size:14.8px;line-height:14.8px;font-weight:normal;color:#ffffff;letter-spacing:-0.045px;">Guardar Datos</span>
</body></html>
